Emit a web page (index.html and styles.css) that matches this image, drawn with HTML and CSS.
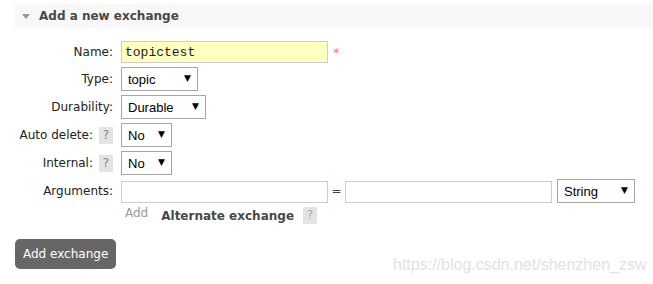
FILE: index.html
```html
<!DOCTYPE html>
<html lang="en">
<head>
  <meta charset="UTF-8">
  <title>Add a new exchange</title>
  <link rel="stylesheet" href="styles.css">
</head>
<body>
  <div class="section">
    <h2 class="section-title"><span class="toggle"></span>Add a new exchange</h2>
    <form class="exchange-form">
      <label class="field-label" for="name">Name:</label>
      <div class="field">
        <input type="text" id="name" class="text-input name-input" value="topictest">
        <span class="required">*</span>
      </div>

      <label class="field-label" for="type">Type:</label>
      <div class="field">
        <span class="select-box select-type">
          <select id="type"><option>topic</option><option>direct</option><option>fanout</option><option>headers</option></select>
        </span>
      </div>

      <label class="field-label" for="durability">Durability:</label>
      <div class="field">
        <span class="select-box select-durable">
          <select id="durability"><option>Durable</option><option>Transient</option></select>
        </span>
      </div>

      <label class="field-label" for="autodelete">Auto delete: <span class="help">?</span></label>
      <div class="field">
        <span class="select-box select-short">
          <select id="autodelete"><option>No</option><option>Yes</option></select>
        </span>
      </div>

      <label class="field-label" for="internal">Internal: <span class="help">?</span></label>
      <div class="field">
        <span class="select-box select-short">
          <select id="internal"><option>No</option><option>Yes</option></select>
        </span>
      </div>

      <label class="field-label label-args" for="argKey">Arguments:</label>
      <div class="field">
        <div class="args-row">
          <input type="text" id="argKey" class="text-input arg-input">
          <span class="equals">=</span>
          <input type="text" class="text-input arg-input">
          <span class="select-box select-string">
            <select><option>String</option><option>Number</option><option>Boolean</option><option>List</option></select>
          </span>
        </div>
        <div class="args-extra">
          <span class="add-link">Add</span>
          <span class="alt-exchange">Alternate exchange</span>
          <span class="help help-light">?</span>
        </div>
      </div>
    </form>
    <button type="button" class="add-button">Add exchange</button>
  </div>
  <div class="watermark">https://blog.csdn.net/shenzhen_zsw</div>
</body>
</html>
```

FILE: styles.css
```css
body {
  margin: 0;
  padding: 4px 0 0 15px;
  font-family: 'DejaVu Sans', Verdana, sans-serif;
  font-size: 12px;
  color: #484848;
  background-color: #fff;
}
.section-title {
  display: flex;
  align-items: center;
  height: 24px;
  margin: 0;
  padding-left: 7px;
  background-color: #f8f8f8;
  font-size: 12px;
  font-weight: bold;
  color: #484848;
}
.toggle {
  width: 0;
  height: 0;
  margin: 1px 9px 0 0;
  border-left: 4.5px solid transparent;
  border-right: 4.5px solid transparent;
  border-top: 5px solid #999;
}
.exchange-form {
  display: grid;
  grid-template-columns: 98px 1fr;
  column-gap: 8px;
  row-gap: 4px;
  margin-top: 13px;
}
.field-label {
  display: flex;
  align-items: center;
  justify-content: flex-end;
  gap: 6px;
  color: #222;
  white-space: nowrap;
}
.label-args {
  align-items: flex-start;
  padding-top: 5px;
}
.field {
  display: flex;
  flex-direction: column;
  align-items: flex-start;
}
.field:first-of-type {
  flex-direction: row;
}
.text-input {
  box-sizing: border-box;
  width: 207px;
  height: 22px;
  margin: 0;
  padding: 0 3px;
  border: 1px solid #ccc;
  font-family: 'Liberation Mono', monospace;
  font-size: 13px;
  color: #222;
  background-color: #fff;
}
.name-input {
  background-color: #ffffc0;
}
.required {
  margin: 4px 0 0 5px;
  color: #f77;
  font-size: 13px;
}
.select-box {
  position: relative;
  display: inline-block;
}
.select-box select {
  box-sizing: border-box;
  height: 24px;
  margin: 0;
  padding: 0 0 0 6px;
  border: 1px solid #a6a6a6;
  appearance: none;
  -webkit-appearance: none;
  background-color: #fff;
  font-family: 'Liberation Sans', Arial, sans-serif;
  font-size: 13px;
  color: #000;
}
.select-box::after {
  content: "▼";
  position: absolute;
  right: 7px;
  top: 6px;
  font-size: 9px;
  color: #000;
  pointer-events: none;
}
.select-type select { width: 77px; }
.select-durable select { width: 85px; }
.select-short select { width: 51px; }
.select-string select { width: 78px; }
.help {
  display: inline-block;
  width: 14px;
  height: 17px;
  line-height: 17px;
  text-align: center;
  background-color: #e4e4e4;
  color: #888;
  font-size: 12px;
}
.help-light {
  color: #aaa;
}
.args-row {
  display: flex;
  align-items: center;
}
.args-row .arg-input {
  margin-top: 1px;
}
.equals {
  width: 17px;
  text-align: center;
  color: #444;
}
.args-row .select-box {
  margin-left: 5px;
}
.args-extra {
  display: flex;
  align-items: center;
  margin-top: 4px;
  padding-left: 4px;
}
.add-link {
  color: #999;
  margin-top: -5px;
}
.alt-exchange {
  margin-left: 13px;
  font-weight: bold;
  font-size: 12px;
  color: #484848;
}
.args-extra .help {
  margin-left: 9px;
}
.add-button {
  display: block;
  height: 30px;
  margin-top: 15px;
  padding: 0 8px;
  border: none;
  border-radius: 5px;
  background-color: #666;
  color: #fff;
  font-family: 'DejaVu Sans', Verdana, sans-serif;
  font-size: 12px;
  cursor: pointer;
}
.watermark {
  position: absolute;
  left: 393px;
  top: 256px;
  font-family: 'Liberation Sans', Arial, sans-serif;
  font-size: 16px;
  color: #e2e2e2;
}
```
